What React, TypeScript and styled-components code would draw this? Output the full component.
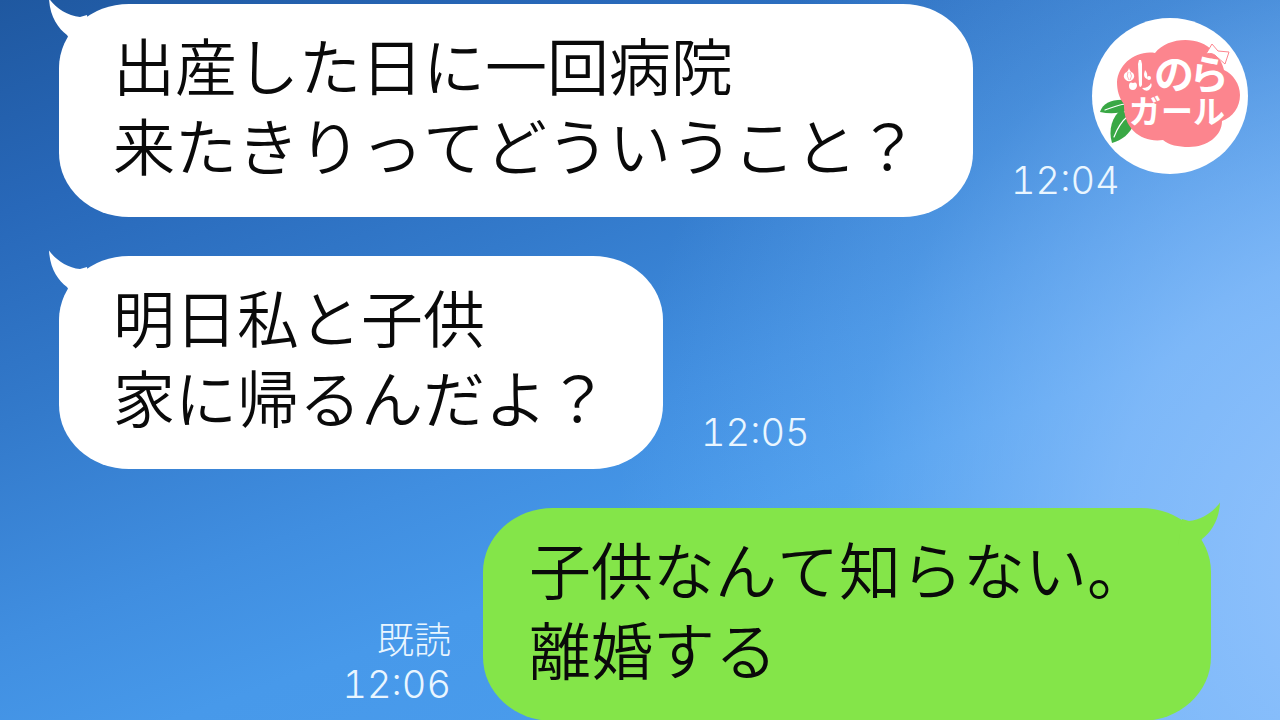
import React from "react";
import styled, { createGlobalStyle } from "styled-components";

const GlobalStyle = createGlobalStyle`
  *, *::before, *::after { box-sizing: border-box; }
  html, body { margin: 0; padding: 0; }
  body {
    background: #3f8fe0;
    font-family: "Noto Sans CJK JP", "Liberation Sans", sans-serif;
  }
`;

type Side = "left" | "right";

const Page = styled.main`
  position: relative;
  min-height: 100vh;
  padding-top: 4px;
  overflow: hidden;
  background:
    radial-gradient(ellipse 60% 120% at 108% 78%, rgba(156, 200, 255, 0.88) 0%, rgba(150, 198, 255, 0.68) 36%, rgba(125, 187, 250, 0.25) 70%, rgba(110, 180, 250, 0) 100%),
    linear-gradient(160deg, #1f58a0 0%, #2868b9 18%, #337acb 36%, #408ee0 54%, #4799ea 66%, #4d9fee 100%);
`;

const Thread = styled.ol`
  display: flex;
  flex-direction: column;
  gap: 39px;
  margin: 0;
  padding: 0 69px 0 59px;
  list-style: none;
`;

const Row = styled.li<{ $side: Side }>`
  display: flex;
  flex-direction: ${(p) => (p.$side === "left" ? "row" : "row-reverse")};
  align-items: flex-end;
  gap: ${(p) => (p.$side === "left" ? "38px" : "32px")};
`;

const Bubble = styled.div<{ $side: Side }>`
  position: relative;
  flex: none;
  padding: ${(p) => (p.$side === "left" ? "20px 54px 33px" : "20px 62px 33px 46px")};
  border-radius: 70px / 64px;
  background: ${(p) => (p.$side === "left" ? "#ffffff" : "#84e549")};
`;

const TailShape = styled.svg<{ $side: Side }>`
  position: absolute;
  top: -6px;
  ${(p) => (p.$side === "left" ? "left: -12px;" : "right: -11px; transform: scaleX(-1);")}
  width: 44px;
  height: 44px;
  fill: ${(p) => (p.$side === "left" ? "#ffffff" : "#84e549")};
`;

const Message = styled.p`
  margin: 0;
  color: #0a0a0a;
  font-size: 62px;
  font-weight: 350;
  font-kerning: none;
  line-height: 80px;
  white-space: nowrap;
`;

const Line = styled.span`
  display: block;
`;

const Meta = styled.div`
  display: flex;
  flex-direction: column;
  align-items: flex-end;
  padding-bottom: 14px;
  color: #eaf6ff;
  font-size: 37px;
  font-weight: 300;
  line-height: 46px;
`;

const Time = styled.time`
  font-family: Inter, "Liberation Sans", sans-serif;
  font-size: 38px;
  font-weight: 300;
  font-variant-numeric: tabular-nums;
`;

const Badge = styled.div`
  position: absolute;
  top: 18px;
  right: 32px;
  width: 156px;
  height: 156px;
  border-radius: 50%;
  overflow: hidden;
  background: #ffffff;
`;

const LogoText = styled.text`
  fill: #ffffff;
  font-family: "Noto Sans CJK JP", sans-serif;
  font-weight: 700;
`;

const Tail = ({ side }: { side: Side }) => (
  <TailShape $side={side} viewBox="0 0 44 44" aria-hidden="true">
    <path d="M2 0.5C8 9 20 18 33 19L40 17L44 44H24L20 37C11 30 3 19 2 0.5Z" />
  </TailShape>
);

const Logo = () => (
  <Badge>
    <svg viewBox="0 0 156 156" width="100%" height="100%" role="img" aria-label="のらガール">
      <g fill="#39a845">
        <path d="M8 94C11 85 20 81 34 82L36 92C27 96 17 96 8 94Z" />
        <path d="M20 125C16 112 20 98 30 91L42 106C38 116 30 122 20 125Z" />
      </g>
      <g fill="none" stroke="#ffffff" strokeWidth="1.2" strokeLinecap="round">
        <path d="M13 92C19 90 25 87 33 86" />
        <path d="M22 119C25 111 30 103 36 98" />
      </g>
      <path
        fill="#fc858e"
        d="M63 35C75 19 107 17 121 33C126 38 130 44 132 52C141 56 148 66 148 77C148 89 141 99 130 103C130 118 115 129 97 129C86 129 77 127 71 122C51 125 31 112 32 86C27 80 25 72 25 64C26 47 43 32 63 35Z"
      />
      <path
        d="M120 26L114 36Q121 34 125 39L133 46L137 34L126 33Z"
        fill="#ffffff"
        stroke="#fc858e"
        strokeWidth="1"
        strokeLinejoin="round"
      />
      <g fill="#ffffff">
        <path d="M37 50Q38 54 41 55A5 5 0 1 1 33 55Q36 54 37 50Z" />
        <path d="M41 65Q45 63 45 68Q44 72 41 72Q37 72 37 68Q37 63 41 65Z" />
        <path d="M47 42H49L50 46L50 67Q48 71 47 67L46 46Z" />
        <path d="M53 52Q56 55 55 61Q52 60 52 56Z" />
        <path d="M50 70Q57 70 59 65Q61 68 57 72Q53 74 50 70Z" />
        <circle cx="57" cy="60" r="2" />
      </g>
      <g stroke="#fc858e" strokeWidth="0.6" fill="none">
        <path d="M36 54Q34 58 37 62M38 54Q41 58 38 62" />
      </g>
      <LogoText x="62" y="71" fontSize="40">の</LogoText>
      <LogoText x="97" y="71" fontSize="40">ら</LogoText>
      <LogoText x="37" y="105" fontSize="32">ガール</LogoText>
    </svg>
  </Badge>
);

interface ChatMessage {
  side: Side;
  lines: string[];
  time: string;
  read?: boolean;
}

const messages: ChatMessage[] = [
  { side: "left", lines: ["出産した日に一回病院", "来たきりってどういうこと？"], time: "12:04" },
  { side: "left", lines: ["明日私と子供", "家に帰るんだよ？"], time: "12:05" },
  { side: "right", lines: ["子供なんて知らない。", "離婚する"], time: "12:06", read: true },
];

export default function App() {
  return (
    <Page>
      <GlobalStyle />
      <Thread>
        {messages.map((m) => (
          <Row key={m.time} $side={m.side}>
            <Bubble $side={m.side}>
              <Tail side={m.side} />
              <Message>
                {m.lines.map((line) => (
                  <Line key={line}>{line}</Line>
                ))}
              </Message>
            </Bubble>
            <Meta>
              {m.read && <span>既読</span>}
              <Time>{m.time}</Time>
            </Meta>
          </Row>
        ))}
      </Thread>
      <Logo />
    </Page>
  );
}
